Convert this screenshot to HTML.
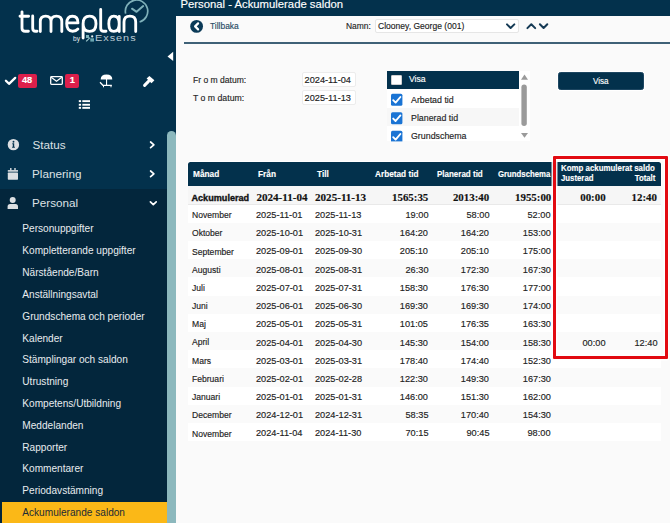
<!DOCTYPE html>
<html><head><meta charset="utf-8">
<style>
*{margin:0;padding:0;box-sizing:border-box}
html,body{width:670px;height:523px;overflow:hidden;background:#fafafa;font-family:"Liberation Sans",sans-serif;color:#333;position:relative}
.abs{position:absolute}
.t{position:absolute;white-space:pre;line-height:1}
.k{-webkit-text-stroke:0.15px currentColor}
.k2{-webkit-text-stroke:0.35px currentColor}
svg{position:absolute;overflow:visible}
</style></head><body>
<div class="abs" style="left:0px;top:0px;width:176px;height:523px;background:#03314c;"></div>
<div class="abs" style="left:0px;top:188.7px;width:167px;height:334.3px;background:#03263c;"></div>
<div class="abs" style="left:167px;top:131px;width:9px;height:399px;background:#8cb8bd;border-radius:4.5px 4.5px 0 0"></div>
<div class="abs" style="left:176px;top:0px;width:494px;height:15.5px;background:#03314c;"></div>
<div class="t k" style="left:180.50px;top:-1px;font-size:11.3px;font-weight:400;color:#fff;font-family:'Liberation Sans',sans-serif;">Personal - Ackumulerade saldon</div>
<div class="t " style="left:32.50px;top:139px;font-size:11.7px;font-weight:400;color:#dde1e5;font-family:'Liberation Sans',sans-serif;">Status</div>
<div class="t " style="left:32.00px;top:168px;font-size:11.7px;font-weight:400;color:#dde1e5;font-family:'Liberation Sans',sans-serif;">Planering</div>
<div class="t " style="left:32.00px;top:197px;font-size:11.7px;font-weight:400;color:#dde1e5;font-family:'Liberation Sans',sans-serif;">Personal</div>
<div class="abs" style="left:1.5px;top:501.8px;width:165.5px;height:21.19999999999999px;background:#fbb817;"></div>
<div class="t " style="left:22.30px;top:224px;font-size:10.1px;font-weight:400;color:#e8ecef;font-family:'Liberation Sans',sans-serif;">Personuppgifter</div>
<div class="t " style="left:22.30px;top:246px;font-size:10.1px;font-weight:400;color:#e8ecef;font-family:'Liberation Sans',sans-serif;">Kompletterande uppgifter</div>
<div class="t " style="left:22.30px;top:268px;font-size:10.1px;font-weight:400;color:#e8ecef;font-family:'Liberation Sans',sans-serif;">Närstående/Barn</div>
<div class="t " style="left:22.30px;top:290px;font-size:10.1px;font-weight:400;color:#e8ecef;font-family:'Liberation Sans',sans-serif;">Anställningsavtal</div>
<div class="t " style="left:22.30px;top:312px;font-size:10.1px;font-weight:400;color:#e8ecef;font-family:'Liberation Sans',sans-serif;">Grundschema och perioder</div>
<div class="t " style="left:22.30px;top:334px;font-size:10.1px;font-weight:400;color:#e8ecef;font-family:'Liberation Sans',sans-serif;">Kalender</div>
<div class="t " style="left:22.30px;top:355px;font-size:10.1px;font-weight:400;color:#e8ecef;font-family:'Liberation Sans',sans-serif;">Stämplingar och saldon</div>
<div class="t " style="left:22.30px;top:377px;font-size:10.1px;font-weight:400;color:#e8ecef;font-family:'Liberation Sans',sans-serif;">Utrustning</div>
<div class="t " style="left:22.30px;top:399px;font-size:10.1px;font-weight:400;color:#e8ecef;font-family:'Liberation Sans',sans-serif;">Kompetens/Utbildning</div>
<div class="t " style="left:22.30px;top:421px;font-size:10.1px;font-weight:400;color:#e8ecef;font-family:'Liberation Sans',sans-serif;">Meddelanden</div>
<div class="t " style="left:22.30px;top:443px;font-size:10.1px;font-weight:400;color:#e8ecef;font-family:'Liberation Sans',sans-serif;">Rapporter</div>
<div class="t " style="left:22.30px;top:464px;font-size:10.1px;font-weight:400;color:#e8ecef;font-family:'Liberation Sans',sans-serif;">Kommentarer</div>
<div class="t " style="left:22.30px;top:486px;font-size:10.1px;font-weight:400;color:#e8ecef;font-family:'Liberation Sans',sans-serif;">Periodavstämning</div>
<div class="t " style="left:22.30px;top:508px;font-size:10.1px;font-weight:400;color:#1c2b36;font-family:'Liberation Sans',sans-serif;">Ackumulerande saldon</div>
<div class="t k" style="left:210.00px;top:21px;font-size:9.4px;font-weight:400;color:#274b64;font-family:'Liberation Sans',sans-serif;;transform:scaleX(0.9);transform-origin:left center;">Tillbaka</div>
<div class="t k" style="left:346.20px;top:22px;font-size:9.1px;font-weight:400;color:#262626;font-family:'Liberation Sans',sans-serif;;transform:scaleX(0.93);transform-origin:left center;">Namn:</div>
<div class="abs" style="left:374.8px;top:19.2px;width:143.8px;height:14.000000000000004px;background:#fff;border:1px solid #e6e6e6;border-radius:2px"></div>
<div class="t k" style="left:377.80px;top:22px;font-size:9.2px;font-weight:400;color:#222;font-family:'Liberation Sans',sans-serif;;transform:scaleX(0.93);transform-origin:left center;">Clooney, George (001)</div>
<div class="abs" style="left:184.3px;top:42px;width:485.7px;height:2px;background:#3f6177;"></div>
<div class="t k" style="left:192.50px;top:76px;font-size:8.8px;font-weight:400;color:#262626;font-family:'Liberation Sans',sans-serif;;transform:scaleX(0.97);transform-origin:left center;">Fr o m datum:</div>
<div class="t k" style="left:192.50px;top:94px;font-size:8.8px;font-weight:400;color:#262626;font-family:'Liberation Sans',sans-serif;;transform:scaleX(0.99);transform-origin:left center;">T o m datum:</div>
<div class="abs" style="left:302.4px;top:72.4px;width:53.400000000000034px;height:14.599999999999994px;background:#fff;border:1px solid #ececec;border-radius:2px"></div>
<div class="abs" style="left:302.4px;top:90.2px;width:53.400000000000034px;height:15.0px;background:#fff;border:1px solid #ececec;border-radius:2px"></div>
<div class="t k" style="left:304.60px;top:76px;font-size:9.2px;font-weight:400;color:#222;font-family:'Liberation Sans',sans-serif;">2024-11-04</div>
<div class="t k" style="left:304.60px;top:94px;font-size:9.2px;font-weight:400;color:#222;font-family:'Liberation Sans',sans-serif;">2025-11-13</div>
<div class="abs" style="left:518.5px;top:70.5px;width:11.0px;height:70.9px;background:#fff;"></div>
<div class="abs" style="left:387.2px;top:71px;width:131.8px;height:18px;background:#03314c;"></div>
<div class="abs" style="left:390.8px;top:74.6px;width:11.300000000000011px;height:10.700000000000003px;background:#fff;border-radius:1px;border:1px solid #d0d0d0"></div>
<div class="t k" style="left:408.60px;top:74px;font-size:9.4px;font-weight:400;color:#fff;font-family:'Liberation Sans',sans-serif;;transform:scaleX(0.92);transform-origin:left center;">Visa</div>
<div class="abs" style="left:387.2px;top:89px;width:131.8px;height:18.5px;background:#fff;"></div>
<div class="abs" style="left:387.2px;top:107.5px;width:131.8px;height:18.900000000000006px;background:#f7f7f7;"></div>
<div class="abs" style="left:387.2px;top:126.4px;width:131.8px;height:15.0px;background:#fff;"></div>
<div class="t k" style="left:410.50px;top:95px;font-size:9.5px;font-weight:400;color:#222;font-family:'Liberation Sans',sans-serif;;transform:scaleX(0.93);transform-origin:left center;">Arbetad tid</div>
<div class="t k" style="left:410.50px;top:113px;font-size:9.5px;font-weight:400;color:#222;font-family:'Liberation Sans',sans-serif;;transform:scaleX(0.93);transform-origin:left center;">Planerad tid</div>
<div class="t k" style="left:410.50px;top:131px;font-size:9.5px;font-weight:400;color:#222;font-family:'Liberation Sans',sans-serif;;transform:scaleX(0.93);transform-origin:left center;">Grundschema</div>
<div class="abs" style="left:558.2px;top:71.9px;width:85.69999999999993px;height:18.099999999999994px;background:#03314c;border-radius:2.5px;box-shadow:0 0 0 1px #fff;border:1px solid #1d4661"></div>
<div class="t k" style="left:592.50px;top:76px;font-size:9.4px;font-weight:400;color:#fff;font-family:'Liberation Sans',sans-serif;;transform:scaleX(0.86);transform-origin:left center;">Visa</div>
<div class="abs" style="left:187px;top:161px;width:475px;height:25px;background:#fff;border-radius:3.5px 3.5px 0 0"></div>
<div class="abs" style="left:188px;top:162px;width:473px;height:24px;background:#03314c;border-radius:2.5px 2.5px 0 0"></div>
<div class="t k" style="left:193.10px;top:170px;font-size:9.2px;font-weight:700;color:#fff;font-family:'Liberation Sans',sans-serif;;transform:scaleX(0.9021739130434784);transform-origin:left center;">Månad</div>
<div class="t k" style="left:257.60px;top:170px;font-size:9.2px;font-weight:700;color:#fff;font-family:'Liberation Sans',sans-serif;;transform:scaleX(0.9021739130434784);transform-origin:left center;">Från</div>
<div class="t k" style="left:316.60px;top:170px;font-size:9.2px;font-weight:700;color:#fff;font-family:'Liberation Sans',sans-serif;;transform:scaleX(0.9021739130434784);transform-origin:left center;">Till</div>
<div class="t k" style="left:375.30px;top:170px;font-size:9.2px;font-weight:700;color:#fff;font-family:'Liberation Sans',sans-serif;;transform:scaleX(0.8967391304347827);transform-origin:left center;">Arbetad tid</div>
<div class="t k" style="left:436.70px;top:170px;font-size:9.2px;font-weight:700;color:#fff;font-family:'Liberation Sans',sans-serif;;transform:scaleX(0.8695652173913044);transform-origin:left center;">Planerad tid</div>
<div class="t k" style="left:498.00px;top:170px;font-size:9.2px;font-weight:700;color:#fff;font-family:'Liberation Sans',sans-serif;;transform:scaleX(0.8478260869565218);transform-origin:left center;">Grundschema</div>
<div class="t k" style="left:561.20px;top:164px;font-size:9.2px;font-weight:700;color:#fff;font-family:'Liberation Sans',sans-serif;;transform:scaleX(0.8586956521739132);transform-origin:left center;">Komp ackumulerat saldo</div>
<div class="t k" style="left:561.20px;top:174px;font-size:9.2px;font-weight:700;color:#fff;font-family:'Liberation Sans',sans-serif;;transform:scaleX(0.8478260869565218);transform-origin:left center;">Justerad</div>
<div class="t k" style="right:14.80px;top:174px;font-size:9.2px;font-weight:700;color:#fff;font-family:'Liberation Sans',sans-serif;;transform:scaleX(0.8478260869565218);transform-origin:right center;">Totalt</div>
<div class="abs" style="left:188px;top:186px;width:473px;height:18.599999999999994px;background:#f6f6f6;border-bottom:1px solid #e9e9e9"></div>
<div class="t k2" style="left:191.50px;top:194px;font-size:9.1px;font-weight:700;color:#111;font-family:'Liberation Sans',sans-serif;">Ackumulerad</div>
<div class="t k" style="left:256.40px;top:192px;font-size:11.1px;font-weight:700;color:#111;font-family:'Liberation Serif',serif;">2024-11-04</div>
<div class="t k" style="left:315.00px;top:192px;font-size:11.1px;font-weight:700;color:#111;font-family:'Liberation Serif',serif;">2025-11-13</div>
<div class="t k" style="right:241.70px;top:192px;font-size:10.9px;font-weight:700;color:#111;font-family:'Liberation Serif',serif;">1565:35</div>
<div class="t k" style="right:180.80px;top:192px;font-size:10.9px;font-weight:700;color:#111;font-family:'Liberation Serif',serif;">2013:40</div>
<div class="t k" style="right:118.70px;top:192px;font-size:10.9px;font-weight:700;color:#111;font-family:'Liberation Serif',serif;">1955:00</div>
<div class="t k" style="right:64.40px;top:192px;font-size:10.9px;font-weight:700;color:#111;font-family:'Liberation Serif',serif;">00:00</div>
<div class="t k" style="right:13.00px;top:192px;font-size:10.9px;font-weight:700;color:#111;font-family:'Liberation Serif',serif;">12:40</div>
<div class="abs" style="left:188px;top:204.6px;width:473px;height:18.19999999999999px;background:#fff;"></div>
<div class="t k" style="left:192.00px;top:211px;font-size:8.9px;font-weight:400;color:#222;font-family:'Liberation Sans',sans-serif;;transform:scaleX(0.965);transform-origin:left center;">November</div>
<div class="t k" style="left:256.30px;top:210px;font-size:9.8px;font-weight:400;color:#222;font-family:'Liberation Sans',sans-serif;;transform:scaleX(0.94);transform-origin:left center;">2025-11-01</div>
<div class="t k" style="left:315.20px;top:210px;font-size:9.8px;font-weight:400;color:#222;font-family:'Liberation Sans',sans-serif;;transform:scaleX(0.94);transform-origin:left center;">2025-11-13</div>
<div class="t k" style="right:241.80px;top:210px;font-size:9.8px;font-weight:400;color:#222;font-family:'Liberation Sans',sans-serif;;transform:scaleX(0.94);transform-origin:right center;">19:00</div>
<div class="t k" style="right:180.90px;top:210px;font-size:9.8px;font-weight:400;color:#222;font-family:'Liberation Sans',sans-serif;;transform:scaleX(0.94);transform-origin:right center;">58:00</div>
<div class="t k" style="right:119.10px;top:210px;font-size:9.8px;font-weight:400;color:#222;font-family:'Liberation Sans',sans-serif;;transform:scaleX(0.94);transform-origin:right center;">52:00</div>
<div class="t k" style="left:192.00px;top:229px;font-size:8.9px;font-weight:400;color:#222;font-family:'Liberation Sans',sans-serif;;transform:scaleX(0.965);transform-origin:left center;">Oktober</div>
<div class="t k" style="left:256.30px;top:228px;font-size:9.8px;font-weight:400;color:#222;font-family:'Liberation Sans',sans-serif;;transform:scaleX(0.94);transform-origin:left center;">2025-10-01</div>
<div class="t k" style="left:315.20px;top:228px;font-size:9.8px;font-weight:400;color:#222;font-family:'Liberation Sans',sans-serif;;transform:scaleX(0.94);transform-origin:left center;">2025-10-31</div>
<div class="t k" style="right:241.80px;top:228px;font-size:9.8px;font-weight:400;color:#222;font-family:'Liberation Sans',sans-serif;;transform:scaleX(0.94);transform-origin:right center;">164:20</div>
<div class="t k" style="right:180.90px;top:228px;font-size:9.8px;font-weight:400;color:#222;font-family:'Liberation Sans',sans-serif;;transform:scaleX(0.94);transform-origin:right center;">164:20</div>
<div class="t k" style="right:119.10px;top:228px;font-size:9.8px;font-weight:400;color:#222;font-family:'Liberation Sans',sans-serif;;transform:scaleX(0.94);transform-origin:right center;">153:00</div>
<div class="abs" style="left:188px;top:241.0px;width:473px;height:18.19999999999999px;background:#fff;"></div>
<div class="t k" style="left:192.00px;top:248px;font-size:8.9px;font-weight:400;color:#222;font-family:'Liberation Sans',sans-serif;;transform:scaleX(0.965);transform-origin:left center;">September</div>
<div class="t k" style="left:256.30px;top:246px;font-size:9.8px;font-weight:400;color:#222;font-family:'Liberation Sans',sans-serif;;transform:scaleX(0.94);transform-origin:left center;">2025-09-01</div>
<div class="t k" style="left:315.20px;top:246px;font-size:9.8px;font-weight:400;color:#222;font-family:'Liberation Sans',sans-serif;;transform:scaleX(0.94);transform-origin:left center;">2025-09-30</div>
<div class="t k" style="right:241.80px;top:246px;font-size:9.8px;font-weight:400;color:#222;font-family:'Liberation Sans',sans-serif;;transform:scaleX(0.94);transform-origin:right center;">205:10</div>
<div class="t k" style="right:180.90px;top:246px;font-size:9.8px;font-weight:400;color:#222;font-family:'Liberation Sans',sans-serif;;transform:scaleX(0.94);transform-origin:right center;">205:10</div>
<div class="t k" style="right:119.10px;top:246px;font-size:9.8px;font-weight:400;color:#222;font-family:'Liberation Sans',sans-serif;;transform:scaleX(0.94);transform-origin:right center;">175:00</div>
<div class="t k" style="left:192.00px;top:266px;font-size:8.9px;font-weight:400;color:#222;font-family:'Liberation Sans',sans-serif;;transform:scaleX(0.965);transform-origin:left center;">Augusti</div>
<div class="t k" style="left:256.30px;top:265px;font-size:9.8px;font-weight:400;color:#222;font-family:'Liberation Sans',sans-serif;;transform:scaleX(0.94);transform-origin:left center;">2025-08-01</div>
<div class="t k" style="left:315.20px;top:265px;font-size:9.8px;font-weight:400;color:#222;font-family:'Liberation Sans',sans-serif;;transform:scaleX(0.94);transform-origin:left center;">2025-08-31</div>
<div class="t k" style="right:241.80px;top:265px;font-size:9.8px;font-weight:400;color:#222;font-family:'Liberation Sans',sans-serif;;transform:scaleX(0.94);transform-origin:right center;">26:30</div>
<div class="t k" style="right:180.90px;top:265px;font-size:9.8px;font-weight:400;color:#222;font-family:'Liberation Sans',sans-serif;;transform:scaleX(0.94);transform-origin:right center;">172:30</div>
<div class="t k" style="right:119.10px;top:265px;font-size:9.8px;font-weight:400;color:#222;font-family:'Liberation Sans',sans-serif;;transform:scaleX(0.94);transform-origin:right center;">167:30</div>
<div class="abs" style="left:188px;top:277.4px;width:473px;height:18.19999999999999px;background:#fff;"></div>
<div class="t k" style="left:192.00px;top:284px;font-size:8.9px;font-weight:400;color:#222;font-family:'Liberation Sans',sans-serif;;transform:scaleX(0.965);transform-origin:left center;">Juli</div>
<div class="t k" style="left:256.30px;top:283px;font-size:9.8px;font-weight:400;color:#222;font-family:'Liberation Sans',sans-serif;;transform:scaleX(0.94);transform-origin:left center;">2025-07-01</div>
<div class="t k" style="left:315.20px;top:283px;font-size:9.8px;font-weight:400;color:#222;font-family:'Liberation Sans',sans-serif;;transform:scaleX(0.94);transform-origin:left center;">2025-07-31</div>
<div class="t k" style="right:241.80px;top:283px;font-size:9.8px;font-weight:400;color:#222;font-family:'Liberation Sans',sans-serif;;transform:scaleX(0.94);transform-origin:right center;">158:30</div>
<div class="t k" style="right:180.90px;top:283px;font-size:9.8px;font-weight:400;color:#222;font-family:'Liberation Sans',sans-serif;;transform:scaleX(0.94);transform-origin:right center;">176:30</div>
<div class="t k" style="right:119.10px;top:283px;font-size:9.8px;font-weight:400;color:#222;font-family:'Liberation Sans',sans-serif;;transform:scaleX(0.94);transform-origin:right center;">177:00</div>
<div class="t k" style="left:192.00px;top:302px;font-size:8.9px;font-weight:400;color:#222;font-family:'Liberation Sans',sans-serif;;transform:scaleX(0.965);transform-origin:left center;">Juni</div>
<div class="t k" style="left:256.30px;top:301px;font-size:9.8px;font-weight:400;color:#222;font-family:'Liberation Sans',sans-serif;;transform:scaleX(0.94);transform-origin:left center;">2025-06-01</div>
<div class="t k" style="left:315.20px;top:301px;font-size:9.8px;font-weight:400;color:#222;font-family:'Liberation Sans',sans-serif;;transform:scaleX(0.94);transform-origin:left center;">2025-06-30</div>
<div class="t k" style="right:241.80px;top:301px;font-size:9.8px;font-weight:400;color:#222;font-family:'Liberation Sans',sans-serif;;transform:scaleX(0.94);transform-origin:right center;">169:30</div>
<div class="t k" style="right:180.90px;top:301px;font-size:9.8px;font-weight:400;color:#222;font-family:'Liberation Sans',sans-serif;;transform:scaleX(0.94);transform-origin:right center;">169:30</div>
<div class="t k" style="right:119.10px;top:301px;font-size:9.8px;font-weight:400;color:#222;font-family:'Liberation Sans',sans-serif;;transform:scaleX(0.94);transform-origin:right center;">174:00</div>
<div class="abs" style="left:188px;top:313.79999999999995px;width:473px;height:18.19999999999999px;background:#fff;"></div>
<div class="t k" style="left:192.00px;top:320px;font-size:8.9px;font-weight:400;color:#222;font-family:'Liberation Sans',sans-serif;;transform:scaleX(0.965);transform-origin:left center;">Maj</div>
<div class="t k" style="left:256.30px;top:319px;font-size:9.8px;font-weight:400;color:#222;font-family:'Liberation Sans',sans-serif;;transform:scaleX(0.94);transform-origin:left center;">2025-05-01</div>
<div class="t k" style="left:315.20px;top:319px;font-size:9.8px;font-weight:400;color:#222;font-family:'Liberation Sans',sans-serif;;transform:scaleX(0.94);transform-origin:left center;">2025-05-31</div>
<div class="t k" style="right:241.80px;top:319px;font-size:9.8px;font-weight:400;color:#222;font-family:'Liberation Sans',sans-serif;;transform:scaleX(0.94);transform-origin:right center;">101:05</div>
<div class="t k" style="right:180.90px;top:319px;font-size:9.8px;font-weight:400;color:#222;font-family:'Liberation Sans',sans-serif;;transform:scaleX(0.94);transform-origin:right center;">176:35</div>
<div class="t k" style="right:119.10px;top:319px;font-size:9.8px;font-weight:400;color:#222;font-family:'Liberation Sans',sans-serif;;transform:scaleX(0.94);transform-origin:right center;">163:30</div>
<div class="t k" style="left:192.00px;top:338px;font-size:8.9px;font-weight:400;color:#222;font-family:'Liberation Sans',sans-serif;;transform:scaleX(0.965);transform-origin:left center;">April</div>
<div class="t k" style="left:256.30px;top:338px;font-size:9.8px;font-weight:400;color:#222;font-family:'Liberation Sans',sans-serif;;transform:scaleX(0.94);transform-origin:left center;">2025-04-01</div>
<div class="t k" style="left:315.20px;top:338px;font-size:9.8px;font-weight:400;color:#222;font-family:'Liberation Sans',sans-serif;;transform:scaleX(0.94);transform-origin:left center;">2025-04-30</div>
<div class="t k" style="right:241.80px;top:338px;font-size:9.8px;font-weight:400;color:#222;font-family:'Liberation Sans',sans-serif;;transform:scaleX(0.94);transform-origin:right center;">145:30</div>
<div class="t k" style="right:180.90px;top:338px;font-size:9.8px;font-weight:400;color:#222;font-family:'Liberation Sans',sans-serif;;transform:scaleX(0.94);transform-origin:right center;">154:00</div>
<div class="t k" style="right:119.10px;top:338px;font-size:9.8px;font-weight:400;color:#222;font-family:'Liberation Sans',sans-serif;;transform:scaleX(0.94);transform-origin:right center;">158:30</div>
<div class="t k" style="right:64.40px;top:338px;font-size:9.8px;font-weight:400;color:#222;font-family:'Liberation Sans',sans-serif;;transform:scaleX(0.94);transform-origin:right center;">00:00</div>
<div class="t k" style="right:12.00px;top:338px;font-size:9.8px;font-weight:400;color:#222;font-family:'Liberation Sans',sans-serif;;transform:scaleX(0.94);transform-origin:right center;">12:40</div>
<div class="abs" style="left:188px;top:350.2px;width:473px;height:18.19999999999999px;background:#fff;"></div>
<div class="t k" style="left:192.00px;top:357px;font-size:8.9px;font-weight:400;color:#222;font-family:'Liberation Sans',sans-serif;;transform:scaleX(0.965);transform-origin:left center;">Mars</div>
<div class="t k" style="left:256.30px;top:356px;font-size:9.8px;font-weight:400;color:#222;font-family:'Liberation Sans',sans-serif;;transform:scaleX(0.94);transform-origin:left center;">2025-03-01</div>
<div class="t k" style="left:315.20px;top:356px;font-size:9.8px;font-weight:400;color:#222;font-family:'Liberation Sans',sans-serif;;transform:scaleX(0.94);transform-origin:left center;">2025-03-31</div>
<div class="t k" style="right:241.80px;top:356px;font-size:9.8px;font-weight:400;color:#222;font-family:'Liberation Sans',sans-serif;;transform:scaleX(0.94);transform-origin:right center;">178:40</div>
<div class="t k" style="right:180.90px;top:356px;font-size:9.8px;font-weight:400;color:#222;font-family:'Liberation Sans',sans-serif;;transform:scaleX(0.94);transform-origin:right center;">174:40</div>
<div class="t k" style="right:119.10px;top:356px;font-size:9.8px;font-weight:400;color:#222;font-family:'Liberation Sans',sans-serif;;transform:scaleX(0.94);transform-origin:right center;">152:30</div>
<div class="t k" style="left:192.00px;top:375px;font-size:8.9px;font-weight:400;color:#222;font-family:'Liberation Sans',sans-serif;;transform:scaleX(0.965);transform-origin:left center;">Februari</div>
<div class="t k" style="left:256.30px;top:374px;font-size:9.8px;font-weight:400;color:#222;font-family:'Liberation Sans',sans-serif;;transform:scaleX(0.94);transform-origin:left center;">2025-02-01</div>
<div class="t k" style="left:315.20px;top:374px;font-size:9.8px;font-weight:400;color:#222;font-family:'Liberation Sans',sans-serif;;transform:scaleX(0.94);transform-origin:left center;">2025-02-28</div>
<div class="t k" style="right:241.80px;top:374px;font-size:9.8px;font-weight:400;color:#222;font-family:'Liberation Sans',sans-serif;;transform:scaleX(0.94);transform-origin:right center;">122:30</div>
<div class="t k" style="right:180.90px;top:374px;font-size:9.8px;font-weight:400;color:#222;font-family:'Liberation Sans',sans-serif;;transform:scaleX(0.94);transform-origin:right center;">149:30</div>
<div class="t k" style="right:119.10px;top:374px;font-size:9.8px;font-weight:400;color:#222;font-family:'Liberation Sans',sans-serif;;transform:scaleX(0.94);transform-origin:right center;">167:30</div>
<div class="abs" style="left:188px;top:386.6px;width:473px;height:18.19999999999999px;background:#fff;"></div>
<div class="t k" style="left:192.00px;top:393px;font-size:8.9px;font-weight:400;color:#222;font-family:'Liberation Sans',sans-serif;;transform:scaleX(0.965);transform-origin:left center;">Januari</div>
<div class="t k" style="left:256.30px;top:392px;font-size:9.8px;font-weight:400;color:#222;font-family:'Liberation Sans',sans-serif;;transform:scaleX(0.94);transform-origin:left center;">2025-01-01</div>
<div class="t k" style="left:315.20px;top:392px;font-size:9.8px;font-weight:400;color:#222;font-family:'Liberation Sans',sans-serif;;transform:scaleX(0.94);transform-origin:left center;">2025-01-31</div>
<div class="t k" style="right:241.80px;top:392px;font-size:9.8px;font-weight:400;color:#222;font-family:'Liberation Sans',sans-serif;;transform:scaleX(0.94);transform-origin:right center;">146:00</div>
<div class="t k" style="right:180.90px;top:392px;font-size:9.8px;font-weight:400;color:#222;font-family:'Liberation Sans',sans-serif;;transform:scaleX(0.94);transform-origin:right center;">151:30</div>
<div class="t k" style="right:119.10px;top:392px;font-size:9.8px;font-weight:400;color:#222;font-family:'Liberation Sans',sans-serif;;transform:scaleX(0.94);transform-origin:right center;">162:00</div>
<div class="t k" style="left:192.00px;top:411px;font-size:8.9px;font-weight:400;color:#222;font-family:'Liberation Sans',sans-serif;;transform:scaleX(0.965);transform-origin:left center;">December</div>
<div class="t k" style="left:256.30px;top:410px;font-size:9.8px;font-weight:400;color:#222;font-family:'Liberation Sans',sans-serif;;transform:scaleX(0.94);transform-origin:left center;">2024-12-01</div>
<div class="t k" style="left:315.20px;top:410px;font-size:9.8px;font-weight:400;color:#222;font-family:'Liberation Sans',sans-serif;;transform:scaleX(0.94);transform-origin:left center;">2024-12-31</div>
<div class="t k" style="right:241.80px;top:410px;font-size:9.8px;font-weight:400;color:#222;font-family:'Liberation Sans',sans-serif;;transform:scaleX(0.94);transform-origin:right center;">58:35</div>
<div class="t k" style="right:180.90px;top:410px;font-size:9.8px;font-weight:400;color:#222;font-family:'Liberation Sans',sans-serif;;transform:scaleX(0.94);transform-origin:right center;">170:40</div>
<div class="t k" style="right:119.10px;top:410px;font-size:9.8px;font-weight:400;color:#222;font-family:'Liberation Sans',sans-serif;;transform:scaleX(0.94);transform-origin:right center;">154:30</div>
<div class="abs" style="left:188px;top:423.0px;width:473px;height:18.19999999999999px;background:#fff;"></div>
<div class="t k" style="left:192.00px;top:430px;font-size:8.9px;font-weight:400;color:#222;font-family:'Liberation Sans',sans-serif;;transform:scaleX(0.965);transform-origin:left center;">November</div>
<div class="t k" style="left:256.30px;top:428px;font-size:9.8px;font-weight:400;color:#222;font-family:'Liberation Sans',sans-serif;;transform:scaleX(0.94);transform-origin:left center;">2024-11-04</div>
<div class="t k" style="left:315.20px;top:428px;font-size:9.8px;font-weight:400;color:#222;font-family:'Liberation Sans',sans-serif;;transform:scaleX(0.94);transform-origin:left center;">2024-11-30</div>
<div class="t k" style="right:241.80px;top:428px;font-size:9.8px;font-weight:400;color:#222;font-family:'Liberation Sans',sans-serif;;transform:scaleX(0.94);transform-origin:right center;">70:15</div>
<div class="t k" style="right:180.90px;top:428px;font-size:9.8px;font-weight:400;color:#222;font-family:'Liberation Sans',sans-serif;;transform:scaleX(0.94);transform-origin:right center;">90:45</div>
<div class="t k" style="right:119.10px;top:428px;font-size:9.8px;font-weight:400;color:#222;font-family:'Liberation Sans',sans-serif;;transform:scaleX(0.94);transform-origin:right center;">98:00</div>
<div class="abs" style="left:553px;top:156px;width:115px;height:203px;border:3px solid #e20b12;border-radius:1px;box-shadow:0 0 0 1.5px rgba(255,255,255,0.9),inset 0 0 0 1.5px rgba(255,255,255,0.9)"></div>
<svg width="670" height="523" style="left:0;top:0"><path d="M22 11.8 V28.2 Q22 31.2 25.2 31.2 H28.4 M20 16.2 H28.6 M32.7 16 V28.2 Q32.7 31.2 35.6 31.2 H37 M40.3 31.6 V21.5 Q40.3 16.1 45.7 16.1 Q51 16.1 51 21.5 V31.6 M51 21.5 Q51 16.1 56.4 16.1 Q61.8 16.1 61.8 21.5 V31.6 M66.8 22.9 H78 Q78 16.2 72.4 16.2 Q66.7 16.2 66.7 23.6 Q66.7 31.2 72.7 31.2 Q76 31.2 77.9 29 M83.1 38 V23.7 Q83.1 16.1 89.6 16.1 Q96 16.1 96 23.7 Q96 31.3 89.6 31.3 Q83.1 31.3 83.1 23.7 M100.7 9.4 V28.2 Q100.7 31.2 103.7 31.2 H106 M119.2 23.7 Q119.2 16.1 113.8 16.1 Q108.8 16.1 108.8 23.7 Q108.8 31.3 113.8 31.3 Q119.2 31.3 119.2 23.7 M119.2 16.5 V31.6 M124 31.6 V22 Q124 16.1 129.9 16.1 Q135.7 16.1 135.7 22 V31.6" fill="none" stroke="#fff" stroke-width="2.85" stroke-linecap="round" stroke-linejoin="round"/><path d="M125.6 13.6 A11.2 11.2 0 1 1 139.6 22" fill="none" stroke="#7fb1ba" stroke-width="1.7"/><path d="M132 8.7 L136.6 11.8 L143.2 6.1" fill="none" stroke="#7fb1ba" stroke-width="2" stroke-linecap="round" stroke-linejoin="round"/><rect x="86" y="35" width="3" height="3" fill="#7db3bb"/><rect x="90.3" y="38.3" width="3.7" height="3.3" fill="#6aa6b0"/><circle cx="92.2" cy="36.4" r="1.1" fill="#e6eef0"/><path d="M86.2 41.4 L90 37.6" stroke="#9cc6cc" stroke-width="1.2"/><path d="M5.9 80.7 L9 83.8 L15.2 77.9" fill="none" stroke="#fff" stroke-width="2.3" stroke-linecap="round" stroke-linejoin="round"/><rect x="50.7" y="76.6" width="11.6" height="7.8" rx="0.8" fill="none" stroke="#fff" stroke-width="1.3"/><path d="M51.2 77.3 L56.5 81.2 L61.8 77.3" fill="none" stroke="#fff" stroke-width="1.3"/><path d="M100.7 79.5 Q100.7 74.4 106.5 74.4 Q112.3 74.4 112.3 79.5 Z" fill="#fff"/><rect x="106" y="79" width="1.1" height="6.2" fill="#fff"/><path d="M100 82.3 L102.9 85.3 H111.8" fill="none" stroke="#fff" stroke-width="1.3"/><path d="M103.5 85 V87.3 M111 85 V87.3" fill="none" stroke="#fff" stroke-width="1"/><path d="M149.4 75.9 L154.4 80.3 L151.5 83.3 L146.6 78.6 Z" fill="#fff"/><path d="M148.5 81.4 L144.6 85.4" fill="none" stroke="#fff" stroke-width="3" stroke-linecap="round"/><rect x="78.8" y="100.2" width="2.3" height="1.9" fill="#fff"/><rect x="82.3" y="100.2" width="7.7" height="1.9" fill="#fff"/><rect x="78.8" y="103.8" width="2.3" height="1.9" fill="#fff"/><rect x="82.3" y="103.8" width="7.7" height="1.9" fill="#fff"/><rect x="78.8" y="106.9" width="2.3" height="1.9" fill="#fff"/><rect x="82.3" y="106.9" width="7.7" height="1.9" fill="#fff"/><path d="M167.5 56.4 L173.2 51.8 V60.9 Z" fill="#fff"/><circle cx="13.4" cy="144.65" r="5.7" fill="#dcdfe2"/><path d="M12.3 143.3 H14.2 V146.7 H14.9 V147.8 H12.1 V146.7 H12.8 V144.3 H12.3 Z" fill="#03314c"/><circle cx="13.5" cy="141.7" r="0.95" fill="#03314c"/><rect x="7.8" y="170.1" width="10.2" height="1.6" fill="#dcdfe2"/><rect x="7.8" y="172.6" width="10.2" height="7.1" rx="0.6" fill="#dcdfe2"/><rect x="10.1" y="168" width="1.4" height="2.5" fill="#dcdfe2"/><rect x="14.3" y="168" width="1.4" height="2.5" fill="#dcdfe2"/><circle cx="12.7" cy="200" r="3" fill="#dcdfe2"/><path d="M7.6 208.9 V206.4 Q7.6 203.9 10.1 203.9 H15.5 Q18 203.9 18 206.4 V208.9 Z" fill="#dcdfe2"/><path d="M150.6 142.0 L153.9 144.8 L150.6 147.60000000000002" fill="none" stroke="#fff" stroke-width="1.7" stroke-linecap="round" stroke-linejoin="round"/><path d="M150.6 171.0 L153.9 173.8 L150.6 176.60000000000002" fill="none" stroke="#fff" stroke-width="1.7" stroke-linecap="round" stroke-linejoin="round"/><path d="M150.4 201.8 L153.3 204.6 L156.2 201.8" fill="none" stroke="#fff" stroke-width="1.7" stroke-linecap="round" stroke-linejoin="round"/><circle cx="196.6" cy="26.4" r="6.4" fill="#0b3a57"/><path d="M198.1 23.4 L195.1 26.4 L198.1 29.4" fill="none" stroke="#fff" stroke-width="2.2" stroke-linecap="round" stroke-linejoin="round"/><path d="M507 24.4 L510.6 28 L514.3 24.4" fill="none" stroke="#153a55" stroke-width="2" stroke-linecap="round" stroke-linejoin="round"/><path d="M527.4 28.1 L531.3 24.2 L535.2 28.1" fill="none" stroke="#153a55" stroke-width="2" stroke-linecap="round" stroke-linejoin="round"/><path d="M539.9 24.2 L543.6 28 L547.3 24.2" fill="none" stroke="#153a55" stroke-width="2" stroke-linecap="round" stroke-linejoin="round"/><rect x="391" y="93.8" width="11.4" height="12" rx="1.5" fill="#1a74d4"/><path d="M393.2 100.19999999999999 L395.6 102.6 L400.4 97.0" fill="none" stroke="#fff" stroke-width="1.9" stroke-linecap="round" stroke-linejoin="round"/><rect x="391" y="112.2" width="11.4" height="12" rx="1.5" fill="#1a74d4"/><path d="M393.2 118.6 L395.6 121 L400.4 115.4" fill="none" stroke="#fff" stroke-width="1.9" stroke-linecap="round" stroke-linejoin="round"/><rect x="391" y="130.79999999999998" width="11.4" height="12" rx="1.5" fill="#1a74d4"/><path d="M393.2 137.2 L395.6 139.6 L400.4 134.0" fill="none" stroke="#fff" stroke-width="1.9" stroke-linecap="round" stroke-linejoin="round"/><rect x="386" y="141.4" width="134" height="6" fill="#fafafa"/><path d="M521 79.8 L524.5 74.5 L528 79.8 Z" fill="#9a9a9a"/><rect x="521.4" y="84.6" width="5.4" height="41.3" rx="2.7" fill="#9b9b9b"/><path d="M521 133 L528 133 L524.5 137.8 Z" fill="#9a9a9a"/></svg>
<div class="abs" style="left:17.9px;top:74.1px;width:19.4px;height:14.100000000000009px;background:#dc1f4b;border-radius:2px"></div>
<div class="abs" style="left:64.7px;top:74.1px;width:14.299999999999997px;height:14.100000000000009px;background:#dc1f4b;border-radius:2px"></div>
<div class="t k" style="left:22.10px;top:75px;font-size:9.4px;font-weight:700;color:#fff;font-family:'Liberation Sans',sans-serif;;transform:scaleX(0.98);transform-origin:left center;">48</div>
<div class="t k" style="left:69.80px;top:75px;font-size:9.4px;font-weight:700;color:#fff;font-family:'Liberation Sans',sans-serif;">1</div>
<div class="t " style="left:73.10px;top:36px;font-size:6.5px;font-weight:400;color:#e8eef2;font-family:'Liberation Sans',sans-serif;">by</div>
<div class="t " style="left:95.40px;top:34px;font-size:8.4px;font-weight:400;color:#bccbd4;font-family:'Liberation Sans',sans-serif;letter-spacing:0.75px;transform:scaleX(1.3);transform-origin:left center;">Exsens</div>
</body></html>
